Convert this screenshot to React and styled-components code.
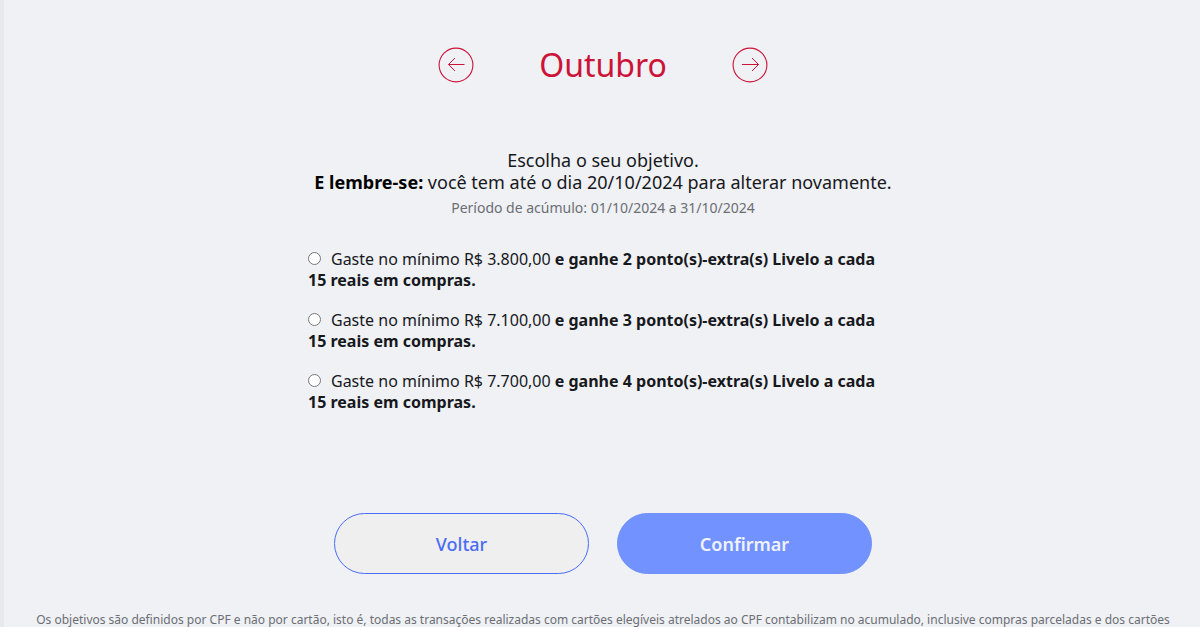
import React, { useState } from 'react'
import styled, { createGlobalStyle } from 'styled-components';

const theme = {
    colors: {
        background: "#eff1f5",
        edge: "#e8e9ed",
        red: "#cc1438",
        blue: "#4a6cf7",
        lightBlue: "#7192ff",
        dark: "#17181c",
        grey: "#6c6e74",
    },
}

const goals = [
    { id: "goal-1", amount: "3.800,00", points: 2 },
    { id: "goal-2", amount: "7.100,00", points: 3 },
    { id: "goal-3", amount: "7.700,00", points: 4 },
]

function Arrow({ direction }) {
    return (
        <svg width="36" height="36" viewBox="0 0 36 36" fill="none" stroke="currentColor" aria-hidden="true">
            <circle cx="18" cy="18" r="16.9" strokeWidth="1.1" />
            {direction === "left"
                ? <path d="M26.500 17.5H10.500M17 11L10.500 17.5L17 24" />
                : <path d="M10 17.5H26.500M20 11L26.500 17.5L20 24" />}
        </svg>
    )
}

function Goal({ id, amount, points, checked, onChange }) {
    return (
        <GoalStyled>
            <input type="radio" name="goal" id={id} checked={checked} onChange={onChange} />
            <label htmlFor={id}>
                {`Gaste no mínimo R$ ${amount} `}
                <b>{`e ganhe ${points} ponto(s)-extra(s) Livelo a cada `}<span>15 reais em compras.</span></b>
            </label>
        </GoalStyled>
    )
}

export default function App() {
    const [selected, setSelected] = useState(null)

    return (
        <>
            <GlobalStyle />
            <PageStyled>
                <MonthStyled>
                    <ArrowButton type="button" aria-label="Mês anterior"><Arrow direction="left" /></ArrowButton>
                    <h1>Outubro</h1>
                    <ArrowButton type="button" aria-label="Próximo mês"><Arrow direction="right" /></ArrowButton>
                </MonthStyled>
                <IntroStyled>
                    <p>Escolha o seu objetivo.</p>
                    <p><b>E lembre-se:</b> você tem até o dia 20/10/2024 para alterar novamente.</p>
                    <p className='period'>Período de acúmulo: 01/10/2024 a 31/10/2024</p>
                </IntroStyled>
                <GoalsStyled>
                    {goals.map((goal) => (
                        <Goal
                            key={goal.id}
                            {...goal}
                            checked={selected === goal.id}
                            onChange={() => setSelected(goal.id)}
                        />
                    ))}
                </GoalsStyled>
                <ActionsStyled>
                    <ActionButton type="button">Voltar</ActionButton>
                    <ActionButton type="button" $primary>Confirmar</ActionButton>
                </ActionsStyled>
                <NoteStyled>
                    Os objetivos são definidos por CPF e não por cartão, isto é, todas as transações realizadas com cartões elegíveis atrelados ao CPF contabilizam no acumulado, inclusive compras parceladas e dos cartões
                </NoteStyled>
            </PageStyled>
        </>
    )
}

const GlobalStyle = createGlobalStyle`
* {
    box-sizing: border-box;
}
body {
    margin: 0;
    background: ${theme.colors.background};
    color: ${theme.colors.dark};
    font-family: "Noto Sans", sans-serif;
}
h1, p {
    margin: 0;
}
button {
    font-family: inherit;
    cursor: pointer;
}
`;

const PageStyled = styled.main`
display: flex;
flex-direction: column;
align-items: center;
min-height: 100vh;
padding: 45px 18px 0 20px;
border-left: 4px solid ${theme.colors.edge};
`;

const MonthStyled = styled.div`
display: flex;
align-items: center;
justify-content: space-between;
width: 330px;
height: 40px;
color: ${theme.colors.red};
h1 {
    font-size: 32px;
    font-weight: 400;
    line-height: 40px;
}
`;

const ArrowButton = styled.button`
display: flex;
padding: 0;
border: none;
border-radius: 50%;
background: none;
color: inherit;
`;

const IntroStyled = styled.div`
margin-top: 64px;
text-align: center;
font-size: 18px;
line-height: 22px;
b {
    color: #000;
}
.period {
    margin-top: 4px;
    font-size: 14px;
    color: ${theme.colors.grey};
}
`;

const GoalsStyled = styled.div`
display: flex;
flex-direction: column;
gap: 19px;
width: 100%;
max-width: 590px;
margin-top: 30px;
`;

const GoalStyled = styled.div`
font-size: 16px;
line-height: 21px;
input {
    width: 13px;
    height: 13px;
    margin: 0 10px 0 0;
    vertical-align: 0;
}
span {
    white-space: nowrap;
}
`;

const ActionsStyled = styled.div`
display: flex;
gap: 28px;
margin-top: 100px;
`;

const ActionButton = styled.button`
width: 255px;
height: 61px;
border: 1px solid ${({ $primary }) => $primary ? theme.colors.lightBlue : theme.colors.blue};
border-radius: 31px;
background: ${({ $primary }) => $primary ? theme.colors.lightBlue : "#efefef"};
color: ${({ $primary }) => $primary ? "#f0f3ff" : theme.colors.blue};
font-size: 18px;
font-weight: ${({ $primary }) => $primary ? 600 : 500};
`;

const NoteStyled = styled.p`
margin-top: 38px;
text-align: center;
font-size: 12px;
line-height: 16px;
color: ${theme.colors.grey};
`;
